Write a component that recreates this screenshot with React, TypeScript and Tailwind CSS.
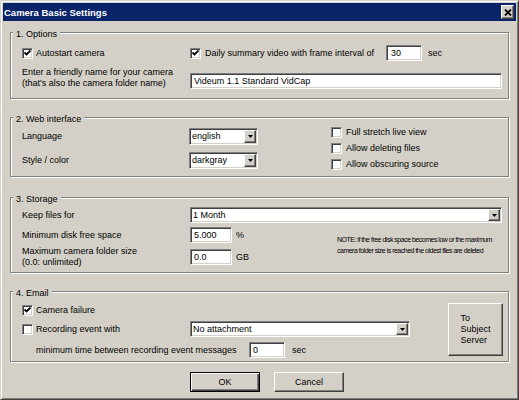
import type { ReactNode } from 'react';

const sunken =
  'bg-white border border-t-[#808080] border-l-[#808080] border-b-white border-r-white shadow-[inset_1px_1px_0_#404040,inset_-1px_-1px_0_#d4d0c8]';
const raised =
  'bg-[#d4d0c8] border border-t-white border-l-white border-r-[#404040] border-b-[#404040] shadow-[inset_-1px_-1px_0_#808080]';

const Check = ({ checked = false }: { checked?: boolean }) => (
  <div className={`w-[11px] h-[11px] shrink-0 flex items-center justify-center ${sunken}`}>
    {checked && (
      <svg width="7" height="7" viewBox="0 0 7 7">
        <path d="M0.5 2.5 L2.5 4.5 L6.5 0.5" stroke="#000" strokeWidth="1.8" fill="none" />
      </svg>
    )}
  </div>
);

const Field = ({ className, children }: { className: string; children?: ReactNode }) => (
  <div className={`flex items-center pl-[3px] whitespace-nowrap ${sunken} ${className}`}>{children}</div>
);

const Select = ({ className, children }: { className: string; children: ReactNode }) => (
  <div className={`flex items-stretch p-px ${sunken} ${className}`}>
    <span className="flex-1 flex items-center pl-px whitespace-nowrap">{children}</span>
    <div className={`w-[12px] flex items-center justify-center ${raised}`}>
      <svg width="5" height="3" viewBox="0 0 5 3">
        <path d="M0 0 H5 L2.5 3 Z" fill="#000" />
      </svg>
    </div>
  </div>
);

const Group = ({ label, className, children }: { label: string; className: string; children: ReactNode }) => (
  <div className={`relative border border-[#808080] shadow-[inset_1px_1px_0_#fff,1px_1px_0_#fff] ${className}`}>
    <span className="absolute -top-[5px] left-[2px] px-[3px] bg-[#d4d0c8] leading-[12px]">{label}</span>
    {children}
  </div>
);

const CheckLabel = ({ checked, label, gap = 'ml-[3px]' }: { checked?: boolean; label: string; gap?: string }) => (
  <div className="flex items-center">
    <Check checked={checked} />
    <span className={`${gap} whitespace-nowrap`}>{label}</span>
  </div>
);

export default function App() {
  return (
    <div className="w-[519px] h-[400px] p-[2px] flex flex-col bg-[#d4d0c8] text-black text-[9px] leading-[11px] font-['Liberation_Sans',Arial,sans-serif] border border-t-[#d4d0c8] border-l-[#d4d0c8] border-r-[#404040] border-b-[#404040] shadow-[inset_1px_1px_0_#fff,inset_-1px_-1px_0_#808080]">
      {/* title bar */}
      <div className="h-[18px] shrink-0 bg-[#0a246a] flex items-center justify-between pl-px pr-[2px]">
        <span className="text-white font-bold text-[9.5px]">Camera Basic Settings</span>
        <div className={`w-[13px] h-[14px] flex items-center justify-center ${raised}`}>
          <svg width="8" height="7" viewBox="0 0 8 7">
            <path d="M1 0.5 L7 6.5 M7 0.5 L1 6.5" stroke="#000" strokeWidth="1.8" />
          </svg>
        </div>
      </div>

      <div className="px-[7px] flex flex-col">
        {/* 1. Options */}
        <Group label="1. Options" className="mt-[11px] h-[67px] pt-[12px] pl-[11px]">
          <div className="flex items-center h-[16px]">
            <div className="w-[168px]">
              <CheckLabel checked label="Autostart camera" />
            </div>
            <div className="w-[196px]">
              <CheckLabel checked label="Daily summary video with frame interval of" gap="ml-[4px]" />
            </div>
            <Field className="w-[36px] h-[16px] pl-[4px]">30</Field>
            <span className="ml-[6px]">sec</span>
          </div>
          <div className="flex items-end mt-[6px] h-[22px]">
            <div className="w-[168px] whitespace-nowrap">
              Enter a friendly name for your camera
              <br />
              (that's also the camera folder name)
            </div>
            <Field className="w-[312px] h-[16px]">Videum 1.1 Standard VidCap</Field>
          </div>
        </Group>

        {/* 2. Web interface */}
        <Group label="2. Web interface" className="mt-[18px] h-[60px] pl-[11px] flex items-start">
          <div className="w-[309px] pt-[10px]">
            <div className="flex items-center h-[17px]">
              <span className="w-[167px]">Language</span>
              <Select className="w-[69px] h-[17px]">english</Select>
            </div>
            <div className="flex items-center h-[17px] mt-[7px]">
              <span className="w-[167px]">Style / color</span>
              <Select className="w-[69px] h-[17px]">darkgray</Select>
            </div>
          </div>
          <div className="pt-[6px]">
            <div className="h-[16px] flex items-center">
              <CheckLabel label="Full stretch live view" gap="ml-[4px]" />
            </div>
            <div className="h-[16px] flex items-center">
              <CheckLabel label="Allow deleting files" gap="ml-[4px]" />
            </div>
            <div className="h-[16px] flex items-center">
              <CheckLabel label="Allow obscuring source" gap="ml-[4px]" />
            </div>
          </div>
        </Group>

        {/* 3. Storage */}
        <Group label="3. Storage" className="mt-[20px] h-[76px] pt-[9px] pl-[11px]">
          <div className="flex items-center h-[16px]">
            <span className="w-[168px]">Keep files for</span>
            <Select className="w-[312px] h-[16px]">1 Month</Select>
          </div>
          <div className="flex mt-[4px]">
            <div className="w-[315px] shrink-0">
              <div className="flex items-center h-[16px]">
                <span className="w-[168px]">Minimum disk free space</span>
                <Field className="w-[42px] h-[16px]">5.000</Field>
                <span className="ml-[4px]">%</span>
              </div>
              <div className="flex items-center h-[22px] mt-[3px]">
                <div className="w-[168px] whitespace-nowrap">
                  Maximum camera folder size
                  <br />
                  (0.0: unlimited)
                </div>
                <Field className="w-[42px] h-[16px]">0.0</Field>
                <span className="ml-[4px]">GB</span>
              </div>
            </div>
            <div className="mt-[7px] whitespace-nowrap text-[7px] tracking-[-0.5px]">
              NOTE: if the free disk space becomes low or the maximum
              <br />
              camera folder size is reached the oldest files are deleted
            </div>
          </div>
        </Group>

        {/* 4. Email */}
        <Group label="4. Email" className="mt-[18px] h-[71px] pl-[11px] flex items-start">
          <div className="pt-[10px]">
            <div className="h-[16px] flex items-center">
              <CheckLabel checked label="Camera failure" />
            </div>
            <div className="h-[16px] flex items-center mt-[3px]">
              <div className="w-[168px]">
                <CheckLabel label="Recording event with" />
              </div>
              <Select className="w-[220px] h-[16px]">No attachment</Select>
            </div>
            <div className="h-[16px] flex items-center mt-[5px] pl-[14px]">
              <span className="w-[213px] whitespace-nowrap">minimum time between recording event messages</span>
              <Field className="w-[36px] h-[16px]">0</Field>
              <span className="ml-[7px]">sec</span>
            </div>
          </div>
          <div className={`ml-auto mt-[11px] mr-[5px] w-[55px] h-[53px] flex items-center justify-center ${raised}`}>
            <div>
              To
              <br />
              Subject
              <br />
              Server
            </div>
          </div>
        </Group>

        {/* dialog buttons */}
        <div className="flex mt-[10px] ml-[180px]">
          <div className="w-[70px] h-[20px] flex items-center justify-center bg-[#d4d0c8] border border-black shadow-[inset_1px_1px_0_#fff,inset_-1px_-1px_0_#404040,inset_-2px_-2px_0_#808080]">
            OK
          </div>
          <div className={`ml-[14px] w-[70px] h-[20px] flex items-center justify-center ${raised}`}>Cancel</div>
        </div>
      </div>
    </div>
  );
}
